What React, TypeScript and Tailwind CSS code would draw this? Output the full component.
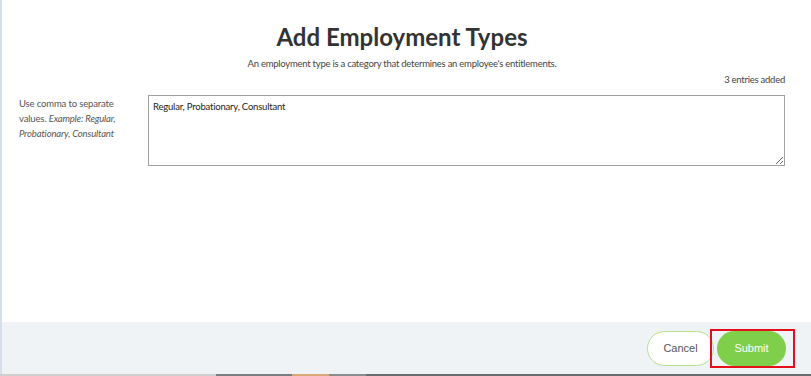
export default function App() {
  return (
    <div className="w-[811px] h-[376px] flex flex-col bg-white overflow-hidden" style={{ fontFamily: "Lato, 'Open Sans', sans-serif" }}>
      <div className="flex flex-1 min-h-0">
        <div className="w-[2px] bg-[#d5dfec]" />
        <div className="flex-1 flex flex-col">
          <div className="flex-1 bg-white pl-[17px] pr-[26px] pt-[22px]">
            <h1 className="text-center text-[24px] leading-[30px] font-bold text-[#333]">Add Employment Types</h1>
            <p className="text-center text-[9.5px] tracking-[-0.25px] leading-[14px] text-[#444] mt-[5px]">An employment type is a category that determines an employee's entitlements.</p>
            <p className="text-right text-[9.5px] tracking-[-0.25px] leading-[14px] text-[#444] mt-[2px]">3 entries added</p>
            <div className="flex mt-[8px]">
              <div className="w-[129px] text-[9.5px] tracking-[-0.15px] leading-[15px] text-[#555] pt-[1px] pr-[22px]">
                Use comma to separate values. <i>Example: Regular, Probationary, Consultant</i>
              </div>
              <textarea
                className="flex-1 h-[71px] border border-[#a0a0a0] px-[4px] py-[4px] text-[9.5px] tracking-[-0.2px] leading-[14px] text-[#222] outline-none resize-y"
                style={{ fontFamily: "Lato, sans-serif" }}
                defaultValue="Regular, Probationary, Consultant"
              />
            </div>
          </div>
          <div className="h-[52px] bg-[#eff3f6] flex items-center justify-end pr-[25px] gap-[3px]" style={{ fontFamily: "'Liberation Sans', Arial, sans-serif" }}>
            <button className="w-[67px] h-[35px] rounded-full border border-[#b7e08f] bg-white text-[11px] text-[#555]">Cancel</button>
            <div className="relative">
              <button className="w-[69px] h-[35px] rounded-full bg-[#7fcf4a] text-[11px] text-white">Submit</button>
              <div className="absolute left-[-7px] top-[-2px] w-[85px] h-[39px] border-2 border-[#e3101a] pointer-events-none" />
            </div>
          </div>
        </div>
      </div>
      <div className="h-[2px] flex">
        <div className="w-[216px] bg-[#cfcfcf]" />
        <div className="w-[76px] bg-[#7a7d80]" />
        <div className="w-[37px] bg-[#d9a77a]" />
        <div className="w-[37px] bg-[#8a8d90]" />
        <div className="flex-1 bg-[#6a6d70]" />
      </div>
    </div>
  );
}
